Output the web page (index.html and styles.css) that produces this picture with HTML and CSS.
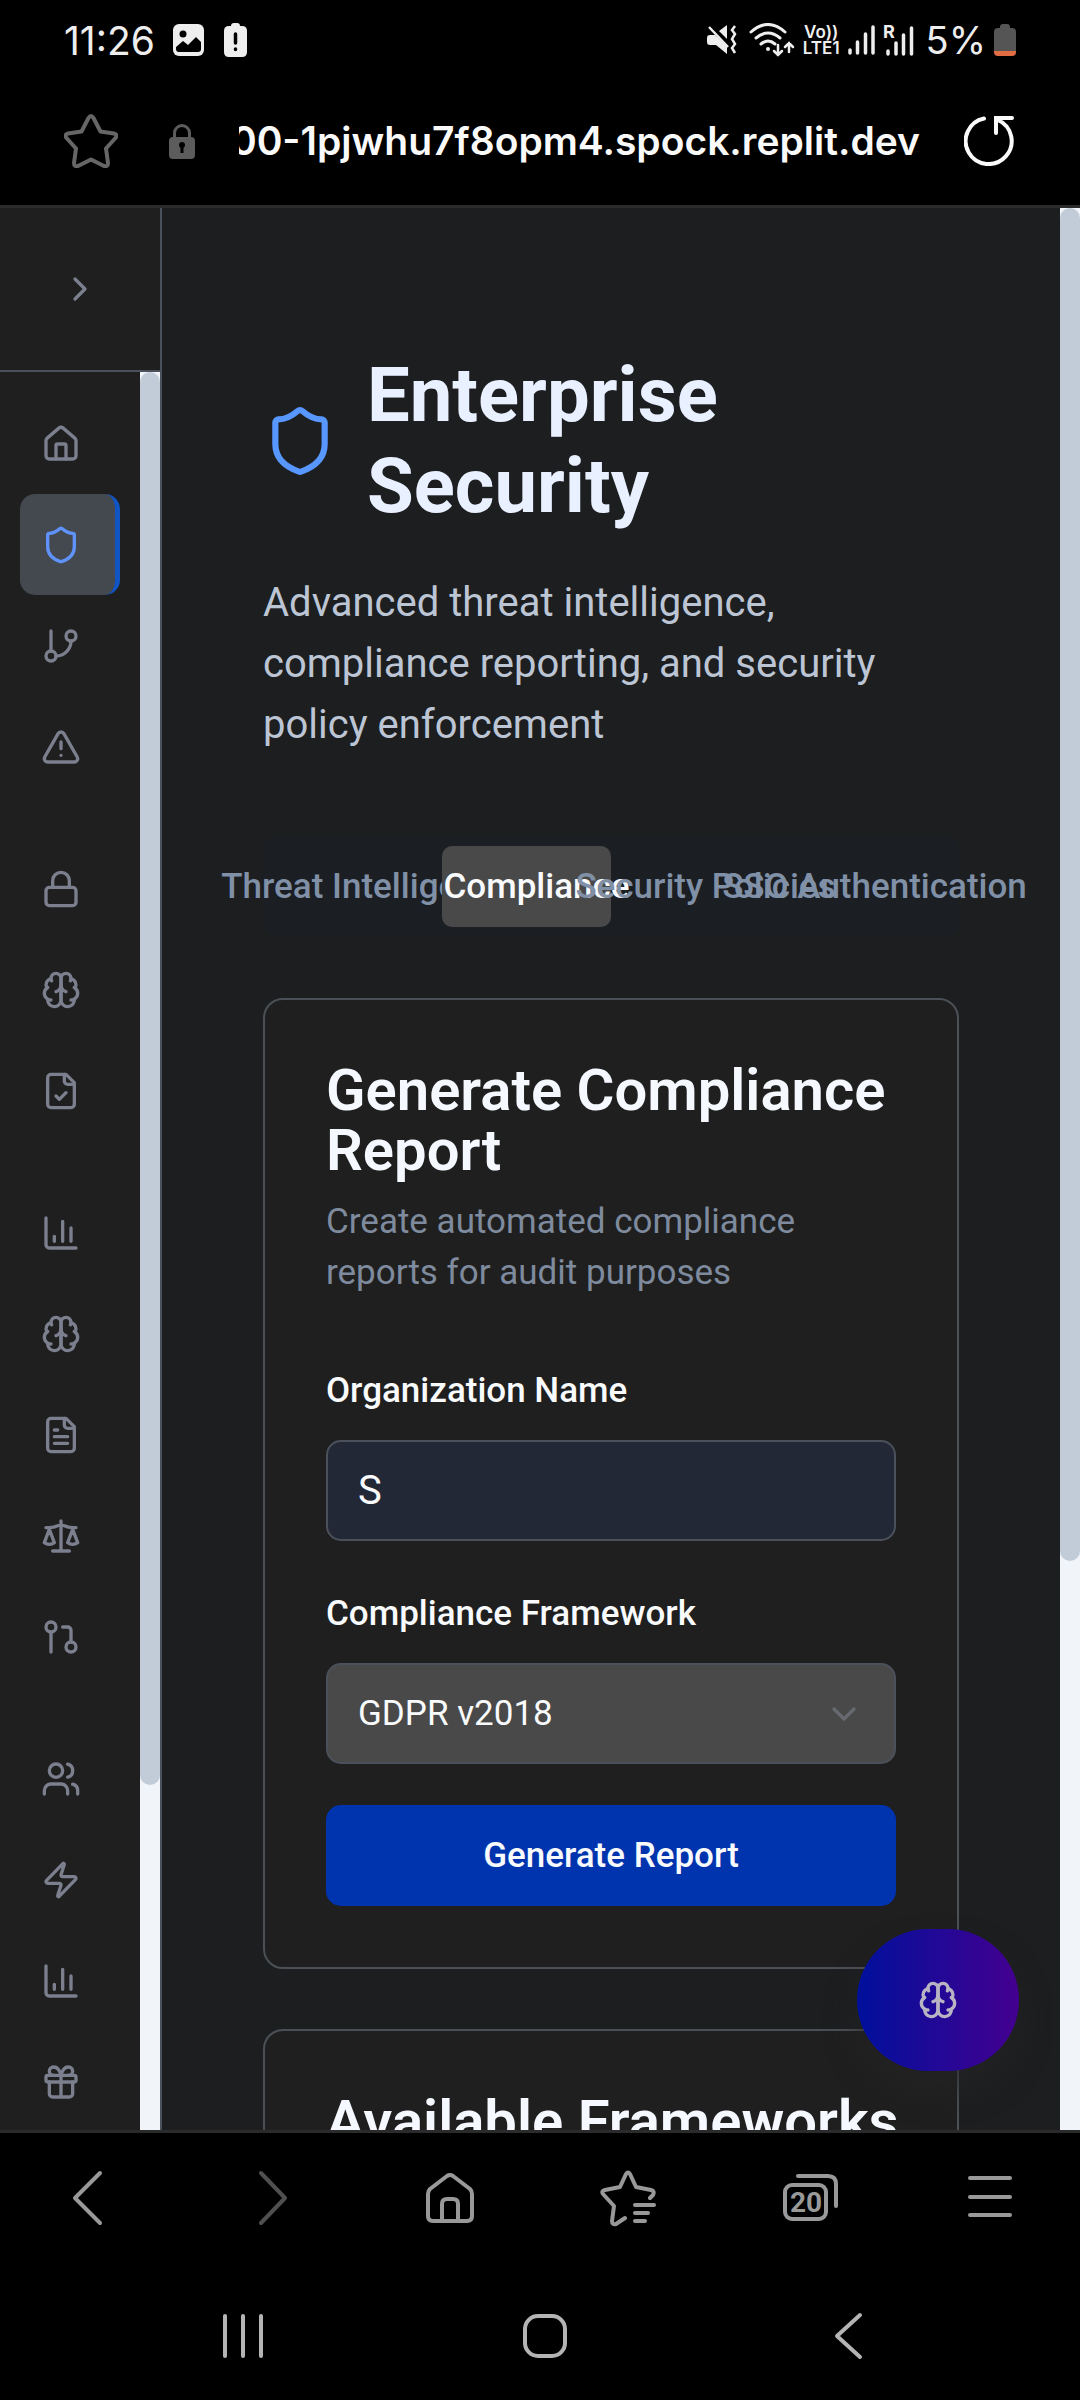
FILE: index.html
```html
<!DOCTYPE html>
<html lang="en">
<head>
<meta charset="utf-8">
<meta name="viewport" content="width=device-width, initial-scale=1">
<title>Enterprise Security</title>
<link rel="stylesheet" href="styles.css">
</head>
<body>
<svg class="sprite" aria-hidden="true">
  <symbol id="i-home" viewBox="0 0 24 24"><path d="M15 21v-8a1 1 0 0 0-1-1h-4a1 1 0 0 0-1 1v8"/><path d="M3 10a2 2 0 0 1 .709-1.528l7-5.999a2 2 0 0 1 2.582 0l7 5.999A2 2 0 0 1 21 10v9a2 2 0 0 1-2 2H5a2 2 0 0 1-2-2z"/></symbol>
  <symbol id="i-shield" viewBox="0 0 24 24"><path d="M20 13c0 5-3.5 7.5-7.66 8.95a1 1 0 0 1-.67-.01C7.5 20.5 4 18 4 13V6a1 1 0 0 1 1-1c2 0 4.500-1.200 6.240-2.720a1.170 1.170 0 0 1 1.520 0C14.510 3.810 17 5 19 5a1 1 0 0 1 1 1z"/></symbol>
  <symbol id="i-branch" viewBox="0 0 24 24"><path d="M6 3v12"/><circle cx="18" cy="6" r="3"/><circle cx="6" cy="18" r="3"/><path d="M18 9a9 9 0 0 1-9 9"/></symbol>
  <symbol id="i-alert" viewBox="0 0 24 24"><path d="m21.730 18-8-14a2 2 0 0 0-3.480 0l-8 14A2 2 0 0 0 4 21h16a2 2 0 0 0 1.730-3"/><path d="M12 9v4M12 17h.01"/></symbol>
  <symbol id="i-lock" viewBox="0 0 24 24"><rect width="18" height="11" x="3" y="11" rx="2"/><path d="M7 11V7a5 5 0 0 1 10 0v4"/></symbol>
  <symbol id="i-brain" viewBox="0 0 24 24"><path d="M12 5a3 3 0 1 0-5.997.125 4 4 0 0 0-2.526 5.770 4 4 0 0 0 .556 6.588A4 4 0 1 0 12 18Z"/><path d="M12 5a3 3 0 1 1 5.997.125 4 4 0 0 1 2.526 5.770 4 4 0 0 1-.556 6.588A4 4 0 1 1 12 18Z"/><path d="M15 13a4.500 4.500 0 0 1-3-4 4.500 4.500 0 0 1-3 4M17.599 6.500a3 3 0 0 0 .399-1.375M6.003 5.125A3 3 0 0 0 6.401 6.500M3.477 10.896a4 4 0 0 1 .585-.396M19.938 10.500a4 4 0 0 1 .585.396M6 18a4 4 0 0 1-1.967-.516M19.967 17.484A4 4 0 0 1 18 18"/></symbol>
  <symbol id="i-filecheck" viewBox="0 0 24 24"><path d="M15 2H6a2 2 0 0 0-2 2v16a2 2 0 0 0 2 2h12a2 2 0 0 0 2-2V7Z"/><path d="M14 2v4a2 2 0 0 0 2 2h4M9 15l2 2 4-4"/></symbol>
  <symbol id="i-chart" viewBox="0 0 24 24"><path d="M3 3v16a2 2 0 0 0 2 2h16M18 17V9M13 17V5M8 17v-3"/></symbol>
  <symbol id="i-filetext" viewBox="0 0 24 24"><path d="M15 2H6a2 2 0 0 0-2 2v16a2 2 0 0 0 2 2h12a2 2 0 0 0 2-2V7Z"/><path d="M14 2v4a2 2 0 0 0 2 2h4M10 9H8M16 13H8M16 17H8"/></symbol>
  <symbol id="i-scale" viewBox="0 0 24 24"><path d="m16 16 3-8 3 8c-.870.650-1.920 1-3 1s-2.130-.350-3-1ZM2 16l3-8 3 8c-.870.650-1.920 1-3 1s-2.130-.350-3-1ZM7 21h10M12 3v18M3 7h2c2 0 5-1 7-2 2 1 5 2 7 2h2"/></symbol>
  <symbol id="i-pull" viewBox="0 0 24 24"><circle cx="18" cy="18" r="3"/><circle cx="6" cy="6" r="3"/><path d="M13 6h3a2 2 0 0 1 2 2v7M6 9v12"/></symbol>
  <symbol id="i-users" viewBox="0 0 24 24"><path d="M16 21v-2a4 4 0 0 0-4-4H6a4 4 0 0 0-4 4v2"/><circle cx="9" cy="7" r="4"/><path d="M22 21v-2a4 4 0 0 0-3-3.870M16 3.130a4 4 0 0 1 0 7.750"/></symbol>
  <symbol id="i-zap" viewBox="0 0 24 24"><path d="M4 14a1 1 0 0 1-.780-1.630l9.900-10.200a.5.5 0 0 1 .860.460l-1.920 6.020A1 1 0 0 0 13 10h7a1 1 0 0 1 .780 1.630l-9.900 10.200a.5.5 0 0 1-.860-.460l1.920-6.020A1 1 0 0 0 11 14z"/></symbol>
  <symbol id="i-gift" viewBox="0 0 24 24"><rect x="3" y="8" width="18" height="4" rx="1"/><path d="M12 8v13M19 12v7a2 2 0 0 1-2 2H7a2 2 0 0 1-2-2v-7M7.500 8a2.500 2.500 0 0 1 0-5A4.800 8 0 0 1 12 8a4.800 8 0 0 1 4.500-5 2.500 2.500 0 0 1 0 5"/></symbol>
  <symbol id="i-right" viewBox="0 0 24 24"><path d="m9 18 6-6-6-6"/></symbol>
  <symbol id="i-down" viewBox="0 0 24 24"><path d="m6 9 6 6 6-6"/></symbol>
</svg>

<header class="statusbar">
  <span class="clock">11:26</span>
  <svg width="31" height="32" viewBox="0 0 31 32"><rect width="31" height="32" rx="6" fill="#eee"/><circle cx="10" cy="10" r="3.500" fill="#000"/><path d="M3 23l7-6 5 4 8-8 5 5v7q0 3-3 3H6q-3 0-3-3z" fill="#000"/></svg>
  <svg class="alertbatt" width="23" height="34" viewBox="0 0 23 34"><path d="M7 3q0-3 3-3h3q3 0 3 3h2q5 0 5 5v21q0 5-5 5H5q-5 0-5-5V8q0-5 5-5z" fill="#eee"/><path d="M11.500 11v9M11.500 26v.5" stroke="#000" stroke-width="3.500" stroke-linecap="round"/></svg>
  <div class="signals">
    <svg width="30" height="30" viewBox="0 0 30 30"><path d="M0 13q0-3 3-3h5l12 11v8L9 20H3q-3 0-3-3zM12 6l8-6v14z" fill="#eee"/><path d="M2 2l19 20M28 1l-3 4 3 4-3 5 3 5-3 4 3 5" fill="none" stroke="#eee" stroke-width="2.500"/></svg>
    <svg class="wifi" width="46" height="34" viewBox="0 0 46 34" fill="none" stroke="#eee" stroke-width="3" stroke-linecap="round"><path d="M2 9q17-15 34 0M7 15q12-10 24 0M12 21q7-6 14 0"/><circle cx="19" cy="26" r="1" fill="#eee" stroke-width="2"/><path d="M29 22v10M25 28l4 4 4-4M40 29V20M36 24l4-4 4 4" stroke-width="2.500"/></svg>
    <span class="volte"><span>Vo))</span><span>LTE1</span></span>
    <svg width="27" height="30" viewBox="0 0 27 30" stroke="#eee" stroke-width="3.500" stroke-linecap="round"><path d="M2 25v3M9.500 17v11M17.500 9v19M25 2v26"/></svg>
    <svg width="31" height="31" viewBox="0 0 31 31" stroke="#eee" stroke-width="3.500" stroke-linecap="round"><path d="M5 26v3M13 18v11M20.500 10v19M28.500 3v26"/><text x="0" y="13" font-size="18" font-weight="700" fill="#eee" stroke="none">R</text></svg>
    <span class="percent">5%</span>
    <svg width="22" height="32" viewBox="0 0 22 32"><path d="M6 3q0-3 3-3h4q3 0 3 3v1h2q4 0 4 4v19H0V8q0-4 4-4h2z" fill="#555"/><path d="M0 27h22v1q0 4-4 4H4q-4 0-4-4z" fill="#e26d42"/></svg>
  </div>
</header>

<div class="urlbar">
  <button aria-label="Bookmark"><svg width="54" height="54" viewBox="0 0 54 54" fill="none" stroke="#666" stroke-width="4" stroke-linejoin="round"><path d="M24.500 4q2.500-4 5 0l7 13.500 13.500 2q4 1 1.500 4.500L42 34.500l2 14.500q0 4-4 3L27 45.500 14 52q-4 1-4-3l2-14.500L2.500 24Q0 20.500 4 19.500l13.500-2z"/></svg></button>
  <svg class="padlock" width="26" height="36" viewBox="0 0 26 36"><path d="M5.500 16v-6a7.500 7.500 0 0 1 15 0v6" fill="none" stroke="#5c5c5c" stroke-width="3"/><rect y="14" width="26" height="22" rx="4" fill="#5c5c5c"/><circle cx="13" cy="22" r="3" fill="#000"/><path d="M13 23v7" stroke="#000" stroke-width="3"/></svg>
  <button class="address">00-1pjwhu7f8opm4.spock.replit.dev</button>
  <button aria-label="Reload"><svg width="50" height="50" viewBox="0 0 50 50" fill="none" stroke="#fafafa" stroke-width="4" stroke-linecap="round"><path d="M20 2.500A23 23 0 1 0 34 4M48 2H32v15"/></svg></button>
</div>

<div class="viewport">
  <aside class="sidebar">
    <button class="expand" aria-label="Expand sidebar"><svg class="icon"><use href="#i-right"/></svg></button>
    <div class="navscroll">
      <nav class="nav">
        <div class="group">
          <a href="#" aria-label="Home"><svg class="icon"><use href="#i-home"/></svg></a>
          <a href="#" class="active" aria-label="Security"><svg class="icon"><use href="#i-shield"/></svg></a>
          <a href="#" aria-label="Branches"><svg class="icon"><use href="#i-branch"/></svg></a>
          <a href="#" aria-label="Alerts"><svg class="icon"><use href="#i-alert"/></svg></a>
        </div>
        <div class="group">
          <a href="#" aria-label="Access"><svg class="icon"><use href="#i-lock"/></svg></a>
          <a href="#" aria-label="Intelligence"><svg class="icon"><use href="#i-brain"/></svg></a>
          <a href="#" aria-label="Compliance"><svg class="icon"><use href="#i-filecheck"/></svg></a>
        </div>
        <div class="group">
          <a href="#" aria-label="Analytics"><svg class="icon"><use href="#i-chart"/></svg></a>
          <a href="#" aria-label="Insights"><svg class="icon"><use href="#i-brain"/></svg></a>
          <a href="#" aria-label="Reports"><svg class="icon"><use href="#i-filetext"/></svg></a>
          <a href="#" aria-label="Legal"><svg class="icon"><use href="#i-scale"/></svg></a>
          <a href="#" aria-label="Pull requests"><svg class="icon"><use href="#i-pull"/></svg></a>
        </div>
        <div class="group">
          <a href="#" aria-label="Team"><svg class="icon"><use href="#i-users"/></svg></a>
          <a href="#" aria-label="Automation"><svg class="icon"><use href="#i-zap"/></svg></a>
          <a href="#" aria-label="Usage"><svg class="icon"><use href="#i-chart"/></svg></a>
          <a href="#" aria-label="Rewards"><svg class="icon"><use href="#i-gift"/></svg></a>
        </div>
      </nav>
      <div class="track"><div class="thumb" style="height:80.4%"></div></div>
    </div>
  </aside>

  <main class="main">
    <div class="title">
      <svg class="icon"><use href="#i-shield"/></svg>
      <h1>Enterprise Security</h1>
    </div>
    <p class="lead">Advanced threat intelligence, compliance reporting, and security policy enforcement</p>

    <div class="tabs" role="tablist">
      <button role="tab">Threat Intelligence</button>
      <button role="tab" class="on" aria-selected="true">Compliance</button>
      <button role="tab">Security Policies</button>
      <button role="tab">SSO Authentication</button>
    </div>

    <section class="card">
      <h2>Generate Compliance Report</h2>
      <p class="desc">Create automated compliance reports for audit purposes</p>
      <form class="form">
        <div class="field">
          <label for="org">Organization Name</label>
          <input id="org" type="text" value="S">
        </div>
        <div class="field">
          <label for="framework">Compliance Framework</label>
          <div class="selectwrap">
            <select id="framework"><option>GDPR v2018</option></select>
            <svg class="icon"><use href="#i-down"/></svg>
          </div>
        </div>
        <button class="primary" type="button">Generate Report</button>
      </form>
    </section>

    <section class="card">
      <h2 class="oneline">Available Frameworks</h2>
    </section>
  </main>
  <div class="track"><div class="thumb" style="height:70.4%"></div></div>
  <button class="fab" aria-label="Assistant"><svg class="icon"><use href="#i-brain"/></svg></button>
</div>

<nav class="toolbar">
  <button aria-label="Back"><svg width="60" height="60" viewBox="0 0 60 60"><path d="M40 5 15 30l25 25"/></svg></button>
  <button aria-label="Forward" class="dim"><svg width="60" height="60" viewBox="0 0 60 60"><path d="m21 5 24 25-24 25"/></svg></button>
  <button aria-label="Home"><svg width="60" height="60" viewBox="0 0 60 60"><path d="M8 26q0-3 2-5L27 8q3-2 6 0l17 13q2 2 2 5v22q0 5-5 5H13q-5 0-5-5z"/><path d="M22 53V36q0-5 5-5h6q5 0 5 5v17"/></svg></button>
  <button aria-label="Bookmarks"><svg width="60" height="60" viewBox="0 0 60 60"><path d="M50 30l3-3q2-4-2-5l-15-3-6-13q-2-3-4 0l-6 13-15 3q-4 1-2 4l11 12-2 15q0 4 4 3l9-6"/><path d="M35 37h19M35 45h13M35 53h10"/></svg></button>
  <button aria-label="Tabs"><svg width="60" height="60" viewBox="0 0 60 60"><rect x="5" y="17" width="41" height="34" rx="7"/><path d="M18 8h30q8 0 8 8v22"/><text x="26" y="44" text-anchor="middle">20</text></svg></button>
  <button aria-label="Menu"><svg width="60" height="60" viewBox="0 0 60 60"><path d="M10 10h40M10 29h40M10 47h40"/></svg></button>
</nav>
<nav class="system">
  <button aria-label="Recent apps"><svg width="48" height="48" viewBox="0 0 48 48"><path d="M6 4v40M24 4v40M42 4v40"/></svg></button>
  <button aria-label="Home screen"><svg width="48" height="48" viewBox="0 0 48 48"><rect x="4" y="4" width="40" height="40" rx="13"/></svg></button>
  <button aria-label="Back"><svg width="48" height="48" viewBox="0 0 48 48"><path d="M36 3 13 24l23 21"/></svg></button>
</nav>
</body>
</html>
```
FILE: styles.css
```css
* { box-sizing: border-box; }
body {
  margin: 0;
  height: 100vh;
  display: flex;
  flex-direction: column;
  background: #000;
  color: #f8fafc;
  font-family: Roboto, "Liberation Sans", sans-serif;
}
button, input, select { font: inherit; color: inherit; margin: 0; border: 0; background: none; padding: 0; }
h1, h2, p { margin: 0; }
svg { display: block; flex: none; }
.sprite { position: absolute; width: 0; height: 0; }
.icon {
  width: 40px; height: 40px;
  fill: none; stroke: currentColor; stroke-width: 2; stroke-linecap: round; stroke-linejoin: round;
}

.statusbar {
  flex: none; height: 80px; padding: 0 64px;
  display: flex; align-items: center;
  color: #eee; font-family: Inter, sans-serif; font-size: 39px;
}
.clock { margin-right: 18px; }
.alertbatt { margin-left: 20px; }
.signals { margin-left: auto; display: flex; align-items: center; gap: 8px; }
.wifi { margin-left: 4px; }
.volte { display: flex; flex-direction: column; align-items: center; font-size: 17px; line-height: 16px; font-weight: 600; }
.percent { margin-left: 4px; font-size: 38px; }

.urlbar {
  flex: none; height: 128px; padding: 0 66px 3px 64px;
  display: flex; align-items: center;
  border-bottom: 3px solid #2b2b2b;
}
.padlock { margin: 0 44px 0 51px; }
.address {
  flex: 1; min-width: 0; margin-right: 44px;
  display: flex; justify-content: flex-end; overflow: hidden; white-space: nowrap;
  font-family: Inter, sans-serif; font-size: 39px; line-height: 60px; font-weight: 600; color: #fafafa;
}

.viewport {
  flex: 1; min-height: 0; position: relative; overflow: hidden;
  display: flex; background: #1d1e20;
}
.sidebar {
  flex: none; width: 162px; display: flex; flex-direction: column;
  background: #1f1f1f; border-right: 2px solid #4b515a; color: #7b7f8e;
}
.expand {
  flex: none; height: 164px; border-bottom: 2px solid #4b515a;
  display: flex; align-items: center; justify-content: center;
}
.navscroll { flex: 1; min-height: 0; display: flex; }
.nav { flex: 1; padding: 21px 20px; display: flex; flex-direction: column; gap: 41px; }
.nav a {
  height: 101px; padding-left: 21px; display: flex; align-items: center;
  border-radius: 15px; color: inherit;
}
.nav a.active { background: #444950; color: #5f92fb; border-right: 5px solid #1155c5; }
.track { flex: none; width: 20px; background: #f1f5f9; }
.thumb { background: #c2ccd9; border-radius: 10px; }

.main { flex: 1; min-width: 0; padding: 142px 101px 0; overflow: hidden; }
.title { display: flex; align-items: center; gap: 30px; color: #5897ff; }
.title .icon { width: 74px; height: 74px; }
h1 { font-size: 76px; line-height: 91px; font-weight: 700; color: #e9f0ff; }
.lead { margin-top: 40px; font-size: 40px; line-height: 61px; color: #bcc5d4; }

.tabs {
  margin: 81px 0 61px; padding: 10px; height: 101px;
  display: grid; grid-template-columns: repeat(4, minmax(0, 1fr));
  background: #1b1e22; border-radius: 15px;
}
.tabs button {
  display: flex; align-items: center; justify-content: center; padding-left: 20px;
  white-space: nowrap; font-size: 35px; font-weight: 500; color: #8090a7; border-radius: 10px;
}
.tabs .on { background: #494949; color: #f8fafc; }

.card {
  margin-bottom: 60px; padding: 60px 61px 61px;
  background: #1f1f1f; border: 2px solid #4b5056; border-radius: 20px;
}
h2 { font-size: 58px; line-height: 60px; font-weight: 600; color: #f5f9ff; }
.oneline { white-space: nowrap; }
.desc { margin-top: 16px; font-size: 35px; line-height: 51px; color: #7e8a9d; }
.form { margin-top: 61px; display: flex; flex-direction: column; gap: 41px; }
.field { display: flex; flex-direction: column; gap: 18px; }
label { font-size: 35px; line-height: 63px; font-weight: 500; }
input, select {
  width: 100%; height: 101px; padding: 0 30px;
  border: 2px solid #4b515a; border-radius: 15px;
}
input { background: #222836; font-size: 40px; }
select { appearance: none; background: #494949; font-size: 35px; }
.selectwrap { display: grid; align-items: center; }
.selectwrap > * { grid-area: 1 / 1; }
.selectwrap .icon { justify-self: end; margin-right: 32px; color: #666a70; pointer-events: none; }
.primary { height: 101px; border-radius: 15px; background: #0034af; font-size: 35px; font-weight: 500; }

.fab {
  position: absolute; right: 61px; bottom: 59px; width: 162px; height: 142px;
  display: flex; align-items: center; justify-content: center;
  border-radius: 71px; background: linear-gradient(90deg, #00109c, #440090); color: #b8b4c4;
  box-shadow: 0 20px 30px rgba(36, 36, 36, .6);
}

.toolbar {
  flex: none; height: 132px; border-top: 3px solid #2b2b2b;
  display: grid; grid-template-columns: repeat(6, 1fr); align-items: center; justify-items: center;
}
.toolbar svg, .system svg { fill: none; stroke: #999; stroke-width: 4; stroke-linecap: round; stroke-linejoin: round; }
.toolbar .dim svg { stroke: #505050; }
.toolbar text { fill: #999; stroke: none; font-size: 28px; font-weight: 700; }
.system {
  flex: none; height: 138px; padding: 10px 81px 0 92px;
  display: grid; grid-template-columns: repeat(3, 1fr); align-items: center; justify-items: center;
}
.system svg { stroke: #b4b4b4; }
```
